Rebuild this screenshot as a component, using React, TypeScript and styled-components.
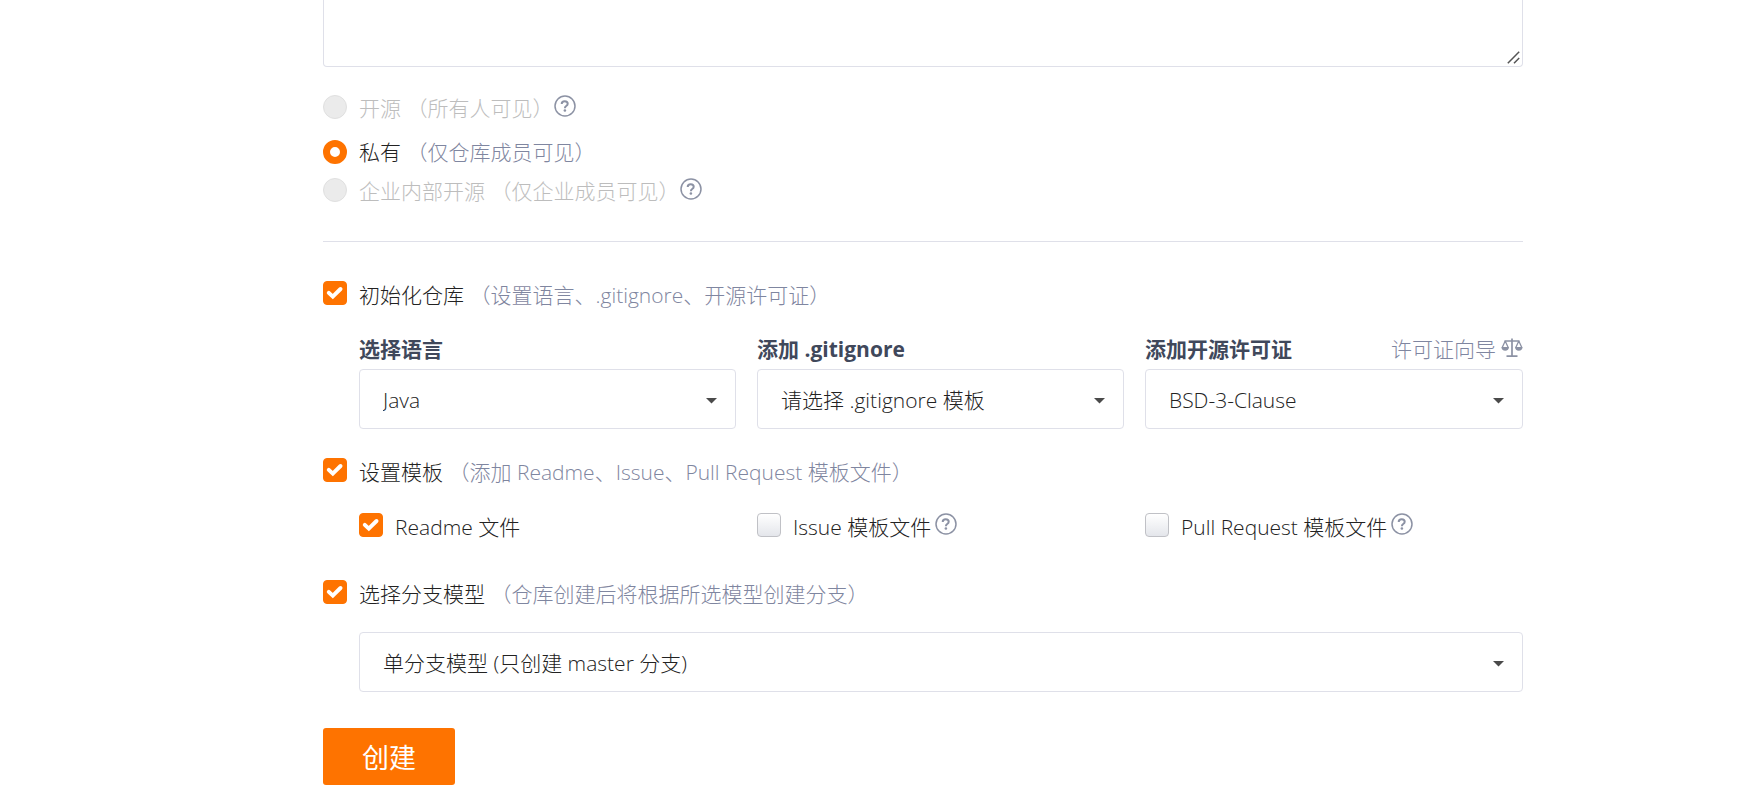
import React from "react";
import styled, { createGlobalStyle } from "styled-components";

const orange = "#fe7300";
const muted = "#8c92a4";
const mutedText = "#7f86a0";
const line = "#dfe0e9";

const GlobalStyle = createGlobalStyle`
  * { box-sizing: border-box; }
  body {
    margin: 0;
    background: #fff;
    color: #222;
    font-family: "Open Sans", "Noto Sans CJK SC", sans-serif;
    font-size: 21px;
    font-weight: 300;
    line-height: 28px;
  }
  input, select, textarea, button { font: inherit; margin: 0; }
`;

const Form = styled.form`
  width: calc(100% - 48px);
  max-width: 1200px;
  margin: 0 auto;
  position: relative;
  left: 43px;

  @media (max-width: 1400px) {
    left: 0;
  }
`;

const DescriptionField = styled.div`
  position: relative;
  display: flex;
`;

const Description = styled.textarea`
  width: 100%;
  height: 67px;
  padding: 12px 22px;
  border: 1px solid ${line};
  border-top: 0;
  border-radius: 0 0 4px 4px;
  color: #333;
  resize: none;
  outline: none;
`;

const Grip = styled.svg`
  position: absolute;
  right: 3px;
  bottom: 3px;
  width: 13px;
  height: 13px;
`;

const RadioList = styled.div`
  display: flex;
  flex-direction: column;
  gap: 14px;
  padding: 28px 0 39px;
  border-bottom: 1px solid ${line};
`;

const Row = styled.div`
  display: flex;
  align-items: flex-start;
  height: 24px;
`;

const RadioRow = styled(Row)<{ $spaced?: boolean }>`
  margin-bottom: ${(p) => (p.$spaced ? "7px" : "0")};
`;

const Label = styled.label<{ $disabled?: boolean }>`
  margin-left: 12px;
  padding-top: 2px;
  line-height: 24px;
  white-space: pre;
  color: ${(p) => (p.$disabled ? "#bdbdbd" : "#222")};
`;

const RadioLabel = styled(Label)`
  padding-top: ${(p) => (p.$disabled ? "1px" : "0")};
`;

const Hint = styled.span<{ $disabled?: boolean }>`
  color: ${(p) => (p.$disabled ? "inherit" : mutedText)};
`;

const Radio = styled.input`
  appearance: none;
  flex: none;
  width: 24px;
  height: 24px;
  border: 7px solid ${orange};
  border-radius: 50%;
  background: #fff;

  &:disabled {
    border: 1px solid #e0e0e0;
    background: #ebebeb;
  }
`;

const CheckWrap = styled.span`
  position: relative;
  flex: none;
  display: flex;
`;

const CheckInput = styled.input`
  appearance: none;
  width: 24px;
  height: 24px;
  border: 1px solid #c0c1c6;
  border-radius: 4px;
  background: linear-gradient(#fff, #e4e6eb);

  &:checked {
    border-color: ${orange};
    background: ${orange};
  }
`;

const CheckMark = styled.svg`
  position: absolute;
  inset: 0;
  width: 24px;
  height: 24px;
  pointer-events: none;
`;

const HelpButton = styled.button<{ $gap?: boolean }>`
  flex: none;
  display: flex;
  width: 22px;
  height: 22px;
  margin-left: ${(p) => (p.$gap ? "4px" : "1px")};
  padding: 0;
  border: 0;
  background: none;
  color: ${muted};

  svg { width: 22px; height: 22px; }
`;

const Section = styled.section<{ $top: number }>`
  margin-top: ${(p) => p.$top}px;
`;

const Columns = styled.div<{ $top: number }>`
  display: grid;
  grid-template-columns: 377fr 367fr 378fr;
  column-gap: 21px;
  margin: ${(p) => p.$top}px 0 0 36px;
`;

const FieldHead = styled.div`
  display: flex;
  justify-content: space-between;
  height: 28px;
  margin-bottom: 6px;
`;

const FieldLabel = styled.label`
  color: #40485b;
  font-weight: 700;
`;

const GuideLink = styled.a`
  display: flex;
  gap: 5px;
  color: ${mutedText};
  text-decoration: none;

  svg {
    width: 22px;
    height: 20px;
    margin-top: 3px;
    color: ${muted};
  }
`;

const SelectWrap = styled.div`
  position: relative;
  display: flex;
`;

const Select = styled.select`
  appearance: none;
  width: 100%;
  height: 60px;
  padding: 2px 50px 0 23px;
  border: 1px solid ${line};
  border-radius: 4px;
  background: #fff;
  color: #222;
`;

const Caret = styled.svg`
  position: absolute;
  top: 29px;
  right: 19px;
  width: 11px;
  height: 6px;
  pointer-events: none;
`;

const BranchField = styled.div`
  margin: 28px 0 0 36px;
`;

const Submit = styled.button`
  display: block;
  width: 132px;
  height: 57px;
  margin: 36px 0 19px;
  padding: 2px 0 0;
  border: 0;
  border-radius: 3px;
  background: ${orange};
  color: #fff;
  font-size: 27px;
  font-weight: 400;
  line-height: 36px;
`;

function Help({ about, gap }: { about: string; gap?: boolean }) {
  return (
    <HelpButton type="button" aria-label={about} $gap={gap}>
      <svg viewBox="0 0 22 22" fill="none" stroke="currentColor">
        <circle cx="11" cy="11" r="10" strokeWidth="1.5" />
        <path d="M7.700 9C7.700 7.300 9 6.300 10.700 6.300s3 1 3 2.500c0 1.100-.7 1.700-1.500 2.200-.9.600-1.300 1-1.300 2.200" strokeWidth="2" />
        <circle cx="10.900" cy="15.500" r="1.300" fill="currentColor" stroke="none" />
      </svg>
    </HelpButton>
  );
}

function Check({ id, checked }: { id: string; checked?: boolean }) {
  const [on, setOn] = React.useState(!!checked);
  return (
    <CheckWrap>
      <CheckInput id={id} type="checkbox" checked={on} onChange={() => setOn(!on)} />
      {on && (
        <CheckMark
          viewBox="0 0 24 24"
          fill="none"
          stroke="#fff"
          strokeWidth="4"
          strokeLinecap="round"
        >
          <path d="M5.800 11.900l4 3.700 7.700-7.600" />
        </CheckMark>
      )}
    </CheckWrap>
  );
}

function Dropdown({ id, label, value }: { id: string; label?: string; value: string }) {
  return (
    <SelectWrap>
      <Select id={id} aria-label={label}>
        <option>{value}</option>
      </Select>
      <Caret viewBox="0 0 11 6">
        <path d="M0 0h11L5.500 5.500z" fill="#4a4a4a" />
      </Caret>
    </SelectWrap>
  );
}

function ScaleIcon() {
  return (
    <svg viewBox="0 0 22 20" fill="none" stroke="currentColor" strokeWidth="1.700">
      <path d="M3.500 3h15M11 .5V18M5.500 18.200h11" />
      <path d="M4.200 3L1.200 9.500M4.200 3l3 6.500M17.800 3l-3 6.500M17.800 3l3 6.500" strokeWidth="1.300" />
      <path
        d="M.4 9h7.600c0 2.400-1.600 3.800-3.800 3.800S.4 11.400.4 9zM14 9h7.600c0 2.400-1.600 3.800-3.800 3.800S14 11.400 14 9z"
        fill="currentColor"
        stroke="none"
      />
    </svg>
  );
}

export default function App() {
  return (
    <>
      <GlobalStyle />
      <Form onSubmit={(e) => e.preventDefault()}>
        <DescriptionField>
          <Description aria-label="仓库介绍" />
          <Grip viewBox="0 0 13 13" stroke="#555" strokeWidth="1.500">
            <path d="M.8 12.200L12.200.8M7 12.200L12.200 7" />
          </Grip>
        </DescriptionField>

        <RadioList>
          <RadioRow $spaced>
            <Radio type="radio" name="visibility" id="public" disabled />
            <RadioLabel htmlFor="public" $disabled>
              开源 <Hint $disabled>（所有人可见）</Hint>
            </RadioLabel>
            <Help about="开源说明" />
          </RadioRow>
          <RadioRow>
            <Radio type="radio" name="visibility" id="private" defaultChecked />
            <RadioLabel htmlFor="private">
              私有 <Hint>（仅仓库成员可见）</Hint>
            </RadioLabel>
          </RadioRow>
          <RadioRow>
            <Radio type="radio" name="visibility" id="internal" disabled />
            <RadioLabel htmlFor="internal" $disabled>
              企业内部开源 <Hint $disabled>（仅企业成员可见）</Hint>
            </RadioLabel>
            <Help about="企业内部开源说明" />
          </RadioRow>
        </RadioList>

        <Section $top={39}>
          <Row>
            <Check id="init" checked />
            <Label htmlFor="init">
              初始化仓库 <Hint>（设置语言、.gitignore、开源许可证）</Hint>
            </Label>
          </Row>
          <Columns $top={30}>
            <div>
              <FieldHead>
                <FieldLabel htmlFor="language">选择语言</FieldLabel>
              </FieldHead>
              <Dropdown id="language" value="Java" />
            </div>
            <div>
              <FieldHead>
                <FieldLabel htmlFor="ignore">添加 .gitignore</FieldLabel>
              </FieldHead>
              <Dropdown id="ignore" value="请选择 .gitignore 模板" />
            </div>
            <div>
              <FieldHead>
                <FieldLabel htmlFor="license">添加开源许可证</FieldLabel>
                <GuideLink href="#license-guide">
                  许可证向导
                  <ScaleIcon />
                </GuideLink>
              </FieldHead>
              <Dropdown id="license" value="BSD-3-Clause" />
            </div>
          </Columns>
        </Section>

        <Section $top={29}>
          <Row>
            <Check id="template" checked />
            <Label htmlFor="template">
              设置模板 <Hint>（添加 Readme、Issue、Pull Request 模板文件）</Hint>
            </Label>
          </Row>
          <Columns $top={31}>
            <Row>
              <Check id="readme" checked />
              <Label htmlFor="readme">Readme 文件</Label>
            </Row>
            <Row>
              <Check id="issue" />
              <Label htmlFor="issue">Issue 模板文件</Label>
              <Help about="Issue 模板说明" gap />
            </Row>
            <Row>
              <Check id="pull" />
              <Label htmlFor="pull">Pull Request 模板文件</Label>
              <Help about="Pull Request 模板说明" gap />
            </Row>
          </Columns>
        </Section>

        <Section $top={43}>
          <Row>
            <Check id="branch" checked />
            <Label htmlFor="branch">
              选择分支模型 <Hint>（仓库创建后将根据所选模型创建分支）</Hint>
            </Label>
          </Row>
          <BranchField>
            <Dropdown id="branch-model" label="分支模型" value="单分支模型 (只创建 master 分支)" />
          </BranchField>
        </Section>

        <Submit type="submit">创建</Submit>
      </Form>
    </>
  );
}
